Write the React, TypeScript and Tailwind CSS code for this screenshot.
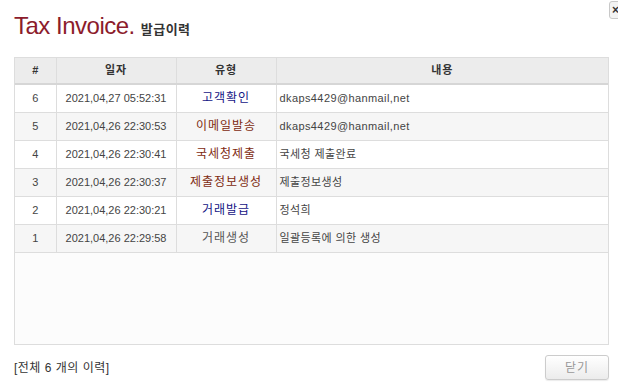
import React from 'react';

type Row = {
	no: number;
	date: string;
	type: string;
	tone: 'blue' | 'brown' | 'gray';
	detail: string;
};

const rows: Row[] = [
	{ no: 6, date: '2021,04,27 05:52:31', type: '고객확인', tone: 'blue', detail: 'dkaps4429@hanmail,net' },
	{ no: 5, date: '2021,04,26 22:30:53', type: '이메일발송', tone: 'brown', detail: 'dkaps4429@hanmail,net' },
	{ no: 4, date: '2021,04,26 22:30:41', type: '국세청제출', tone: 'brown', detail: '국세청 제출완료' },
	{ no: 3, date: '2021,04,26 22:30:37', type: '제출정보생성', tone: 'brown', detail: '제출정보생성' },
	{ no: 2, date: '2021,04,26 22:30:21', type: '거래발급', tone: 'blue', detail: '정석희' },
	{ no: 1, date: '2021,04,26 22:29:58', type: '거래생성', tone: 'gray', detail: '일괄등록에 의한 생성' },
];

const toneClass = {
	blue: 'text-[#141485]',
	brown: 'text-[#7e2a10]',
	gray: 'text-[#555555]',
};

const font = { fontFamily: '"Liberation Sans", "Noto Sans CJK KR", sans-serif' };

export default function App() {
	return (
		<div className="relative w-[618px] h-[387px] overflow-hidden bg-white text-[11px] text-[#444]" style={font}>
			{/* 잘린 닫기 버튼 */}
			<div className="absolute left-[609px] top-[1px] w-[18px] h-[18px] rounded-[3px] border border-[#c8c8c8] bg-[#f3f3f3] flex items-center pl-[2px] text-[12px] font-bold text-[#333] leading-none">
				×
			</div>

			<div className="px-[14px] pt-[14px]">
				<h1 className="flex items-baseline h-[28px]">
					<span className="text-[24px] tracking-[-0.5px] text-[#8c1c2c] leading-none">Tax Invoice.</span>
					<span className="ml-[6px] text-[13px] font-bold text-[#333] tracking-[0.5px]">발급이력</span>
				</h1>

				<div className="mt-[15px] h-[288px] w-[595px] border border-[#dddddd] bg-[#fcfcfc]">
					<table className="w-full border-collapse table-fixed">
						<colgroup>
							<col className="w-[41px]" />
							<col className="w-[120px]" />
							<col className="w-[100px]" />
							<col />
						</colgroup>
						<thead>
							<tr className="h-[26px] bg-[#ececec] border-b-2 border-[#d6d6d6]">
								<th className="font-bold text-[#333] border-r border-[#dddddd]">#</th>
								<th className="font-bold text-[#333] border-r border-[#dddddd] tracking-[1px]">일자</th>
								<th className="font-bold text-[#333] border-r border-[#dddddd] tracking-[1px]">유형</th>
								<th className="font-bold text-[#333] tracking-[1px]">내용</th>
							</tr>
						</thead>
						<tbody>
							{rows.map((r, i) => (
								<tr
									key={r.no}
									className={`h-[28px] border-b border-[#dddddd] ${i % 2 === 0 ? 'bg-white' : 'bg-[#f6f6f6]'}`}
								>
									<td className="text-center border-r border-[#dddddd]">{r.no}</td>
									<td className="text-center border-r border-[#dddddd]">{r.date}</td>
									<td className={`text-center text-[12px] tracking-[1px] border-r border-[#dddddd] ${toneClass[r.tone]}`}>
										{r.type}
									</td>
									<td className="pl-[3px] tracking-[0.4px]">{r.detail}</td>
								</tr>
							))}
						</tbody>
					</table>
				</div>

				<div className="mt-[10px] w-[595px] flex items-center justify-between">
					<span className="text-[12px] tracking-[0.5px] text-[#333]">[전체 6 개의 이력]</span>
					<button className="w-[64px] h-[25px] rounded-[3px] border border-[#cccccc] bg-gradient-to-b from-white to-[#ececec] text-[12px] tracking-[1px] text-[#999] shadow-[0_1px_1px_rgba(0,0,0,0.08)]">
						닫기
					</button>
				</div>
			</div>
		</div>
	);
}
